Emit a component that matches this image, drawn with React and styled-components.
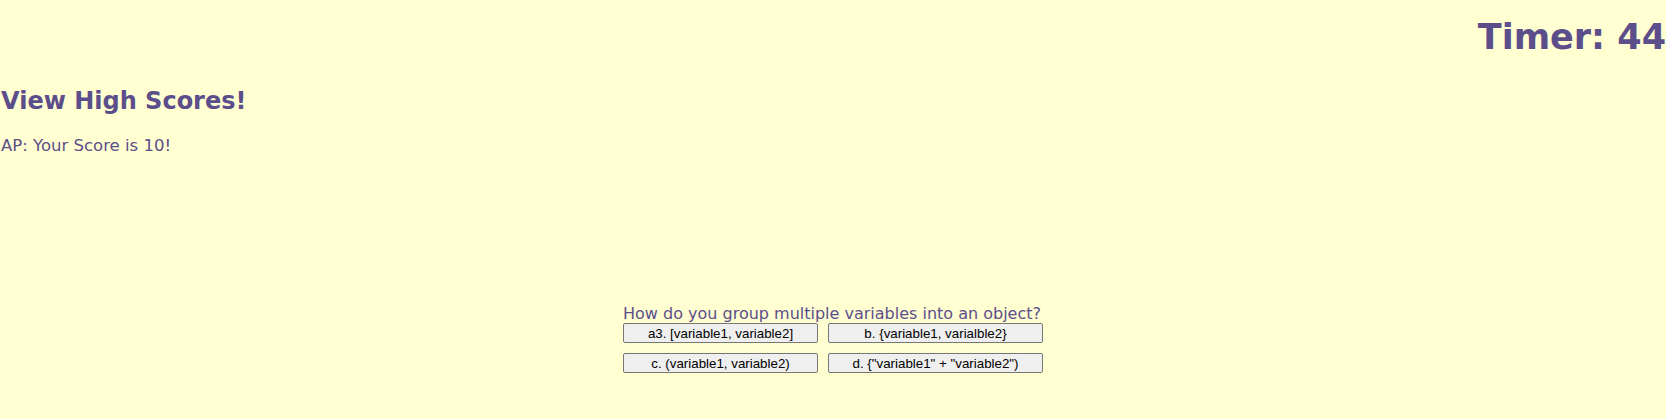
import React from "react";
import styled, { createGlobalStyle } from "styled-components";

const GlobalStyle = createGlobalStyle`
  html, body {
    margin: 0;
    padding: 0;
    background-color: #ffffd2;
  }
  body {
    font-family: "DejaVu Sans", Verdana, sans-serif;
    color: #5c4e8a;
  }
`;

const Page = styled.div`
  display: flex;
  flex-direction: column;
  min-height: 419px;
`;

const Header = styled.header`
  display: flex;
  justify-content: flex-end;
  padding-top: 17px;
`;

const Timer = styled.h1`
  margin: 0;
  font-size: 35px;
  font-weight: bold;
`;

const HighScores = styled.h2`
  margin: 30px 0 0 1px;
  font-size: 24px;
  font-weight: bold;
`;

const ScoreLine = styled.p`
  margin: 21px 0 0 1px;
  font-size: 16.5px;
`;

const Quiz = styled.section`
  align-self: center;
  margin-top: 150px;
  display: flex;
  flex-direction: column;
`;

const Question = styled.div`
  font-size: 16px;
  line-height: 18px;
`;

const Choices = styled.div`
  display: grid;
  grid-template-columns: 195px 215px;
  column-gap: 10px;
  row-gap: 10px;
`;

const Choice = styled.button`
  height: 20px;
  padding: 0 6px;
  font-family: "Liberation Sans", Arial, sans-serif;
  font-size: 13.33px;
  color: #000;
  background-color: #efefef;
  border: 1px solid #767676;
  border-radius: 2px;
  cursor: pointer;
  &:hover {
    background-color: #e5e5e5;
  }
`;

const choices = [
  "a3. [variable1, variable2]",
  "b. {variable1, varialble2}",
  "c. (variable1, variable2)",
  'd. {"variable1" + "variable2")',
];

const App = () => {
  return (
    <Page>
      <GlobalStyle />
      <Header>
        <Timer>Timer: 44</Timer>
      </Header>
      <HighScores>View High Scores!</HighScores>
      <ScoreLine>AP: Your Score is 10!</ScoreLine>
      <Quiz>
        <Question>How do you group multiple variables into an object?</Question>
        <Choices>
          {choices.map((c) => (
            <Choice key={c}>{c}</Choice>
          ))}
        </Choices>
      </Quiz>
    </Page>
  );
};

export default App;
